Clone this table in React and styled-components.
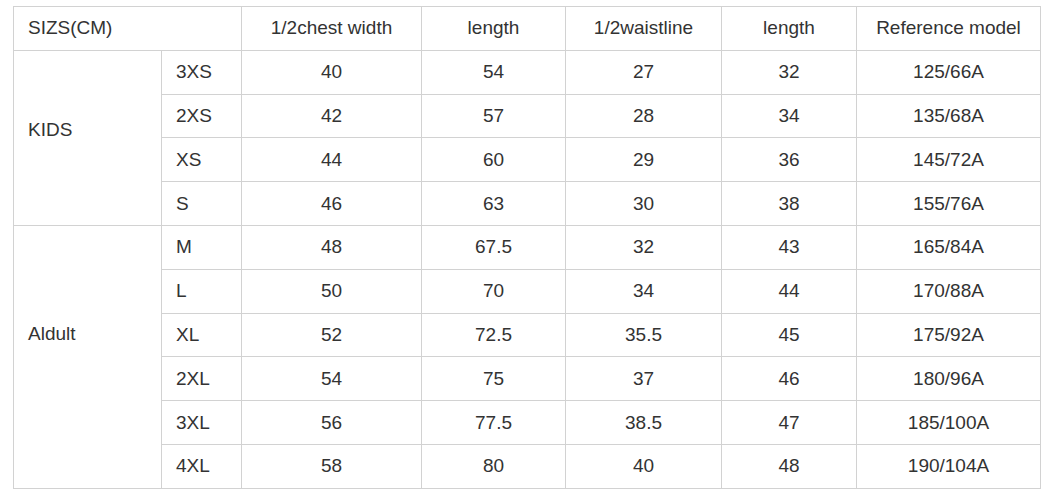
import React from "react";
import styled, { createGlobalStyle } from "styled-components";

const Global = createGlobalStyle`
  html, body { margin: 0; padding: 0; background: #fff; }
  body { font-family: "Liberation Sans", Arial, sans-serif; }
`;

const Page = styled.div`
  padding: 6px 0 0 13px;
  width: 1060px;
  height: 501px;
  box-sizing: border-box;
`;

const Table = styled.table`
  border-collapse: collapse;
  width: 1027px;
  height: 482px;
  table-layout: fixed;
  color: #333;
  font-size: 19px;
`;

const Row = styled.tr`
  height: 43.8px;
`;

const Cell = styled.td`
  border: 1px solid #d2d2d2;
  padding: 0 14px;
  text-align: ${(p) => (p.$left ? "left" : "center")};
  vertical-align: middle;
  white-space: nowrap;
`;

const GroupCell = styled(Cell)`
  padding-bottom: ${(p) => p.$lift}px;
`;

const widths = [148, 80, 180, 144, 156, 135, 184];

const kids = [
  ["3XS", "40", "54", "27", "32", "125/66A"],
  ["2XS", "42", "57", "28", "34", "135/68A"],
  ["XS", "44", "60", "29", "36", "145/72A"],
  ["S", "46", "63", "30", "38", "155/76A"],
];
const adult = [
  ["M", "48", "67.5", "32", "43", "165/84A"],
  ["L", "50", "70", "34", "44", "170/88A"],
  ["XL", "52", "72.5", "35.5", "45", "175/92A"],
  ["2XL", "54", "75", "37", "46", "180/96A"],
  ["3XL", "56", "77.5", "38.5", "47", "185/100A"],
  ["4XL", "58", "80", "40", "48", "190/104A"],
];

const Group = ({ label, rows, lift }) =>
  rows.map((r, i) => (
    <Row key={r[0]}>
      {i === 0 && (
        <GroupCell $left $lift={lift} rowSpan={rows.length}>
          {label}
        </GroupCell>
      )}
      <Cell $left>{r[0]}</Cell>
      {r.slice(1).map((v, j) => (
        <Cell key={j}>{v}</Cell>
      ))}
    </Row>
  ));

export default function App() {
  return (
    <Page>
      <Global />
      <Table>
        <colgroup>
          {widths.map((w, i) => (
            <col key={i} style={{ width: w }} />
          ))}
        </colgroup>
        <tbody>
          <Row>
            <Cell $left colSpan={2}>SIZS(CM)</Cell>
            <Cell>1/2chest width</Cell>
            <Cell>length</Cell>
            <Cell>1/2waistline</Cell>
            <Cell>length</Cell>
            <Cell>Reference model</Cell>
          </Row>
          <Group label="KIDS" rows={kids} lift={16} />
          <Group label="Aldult" rows={adult} lift={46} />
        </tbody>
      </Table>
    </Page>
  );
}
